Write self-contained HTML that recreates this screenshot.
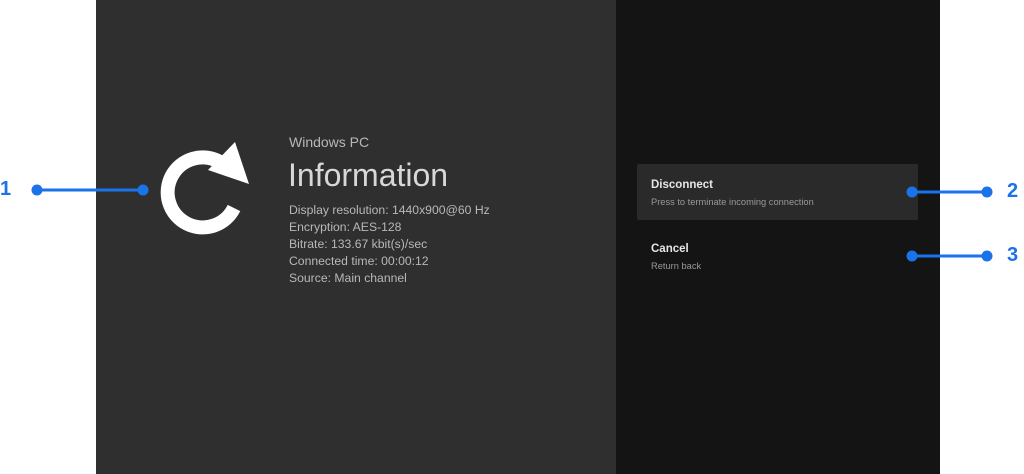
<!DOCTYPE html>
<html><head><style>
body{margin:0;width:1024px;height:474px;background:#fff;position:relative;overflow:hidden;font-family:"Liberation Sans",sans-serif}
.l{position:absolute;left:96px;top:0;width:520px;height:474px;background:#2f2f2f}
.r{position:absolute;left:616px;top:0;width:324px;height:474px;background:#141414}
.t{position:absolute;color:#b8b8b8;white-space:nowrap}
.card{position:absolute;left:637px;top:164px;width:281px;height:56px;background:#2a2a2a;border-radius:2px}
.n{position:absolute;color:#1a73e8;font-weight:bold;font-size:20px}
</style></head><body>
<div class="l"></div><div class="r"></div>
<div class="card"></div>
<svg style="position:absolute;left:0;top:0" width="1024" height="474">
<path d="M234 208 A35 35 0 1 1 220 162" fill="none" stroke="#fff" stroke-width="14"/>
<polygon points="235,142 249,184 208,170" fill="#fff"/>
<g stroke="#1a73e8" stroke-width="3" fill="#1a73e8">
<line x1="37" y1="190" x2="143" y2="190"/><circle cx="37" cy="190" r="4"/><circle cx="143" cy="190" r="4"/>
<line x1="912" y1="192" x2="987" y2="192"/><circle cx="912" cy="192" r="4"/><circle cx="987" cy="192" r="4"/>
<line x1="912" y1="256" x2="987" y2="256"/><circle cx="912" cy="256" r="4"/><circle cx="987" cy="256" r="4"/>
</g></svg>
<div class="n" style="left:0;top:178px">1</div>
<div class="n" style="left:1007px;top:180px">2</div>
<div class="n" style="left:1007px;top:244px">3</div>
<div class="t" style="left:289px;top:134px;font-size:14px">Windows PC</div>
<div class="t" style="left:288px;top:157px;font-size:32px;color:#d8d8d8">Information</div>
<div class="t" style="left:289px;top:202px;font-size:12.2px;line-height:17px">Display resolution: 1440x900@60 Hz<br>Encryption: AES-128<br>Bitrate: 133.67 kbit(s)/sec<br>Connected time: 00:00:12<br>Source: Main channel</div>
<div class="t" style="left:651px;top:179px;font-size:11.5px;color:#e6e6e6;font-weight:bold">Disconnect</div>
<div class="t" style="left:651px;top:197px;font-size:9.3px;color:#999">Press to terminate incoming connection</div>
<div class="t" style="left:651px;top:243px;font-size:11.5px;color:#e6e6e6;font-weight:bold">Cancel</div>
<div class="t" style="left:651px;top:261px;font-size:9.3px;color:#999">Return back</div>
</body></html>
